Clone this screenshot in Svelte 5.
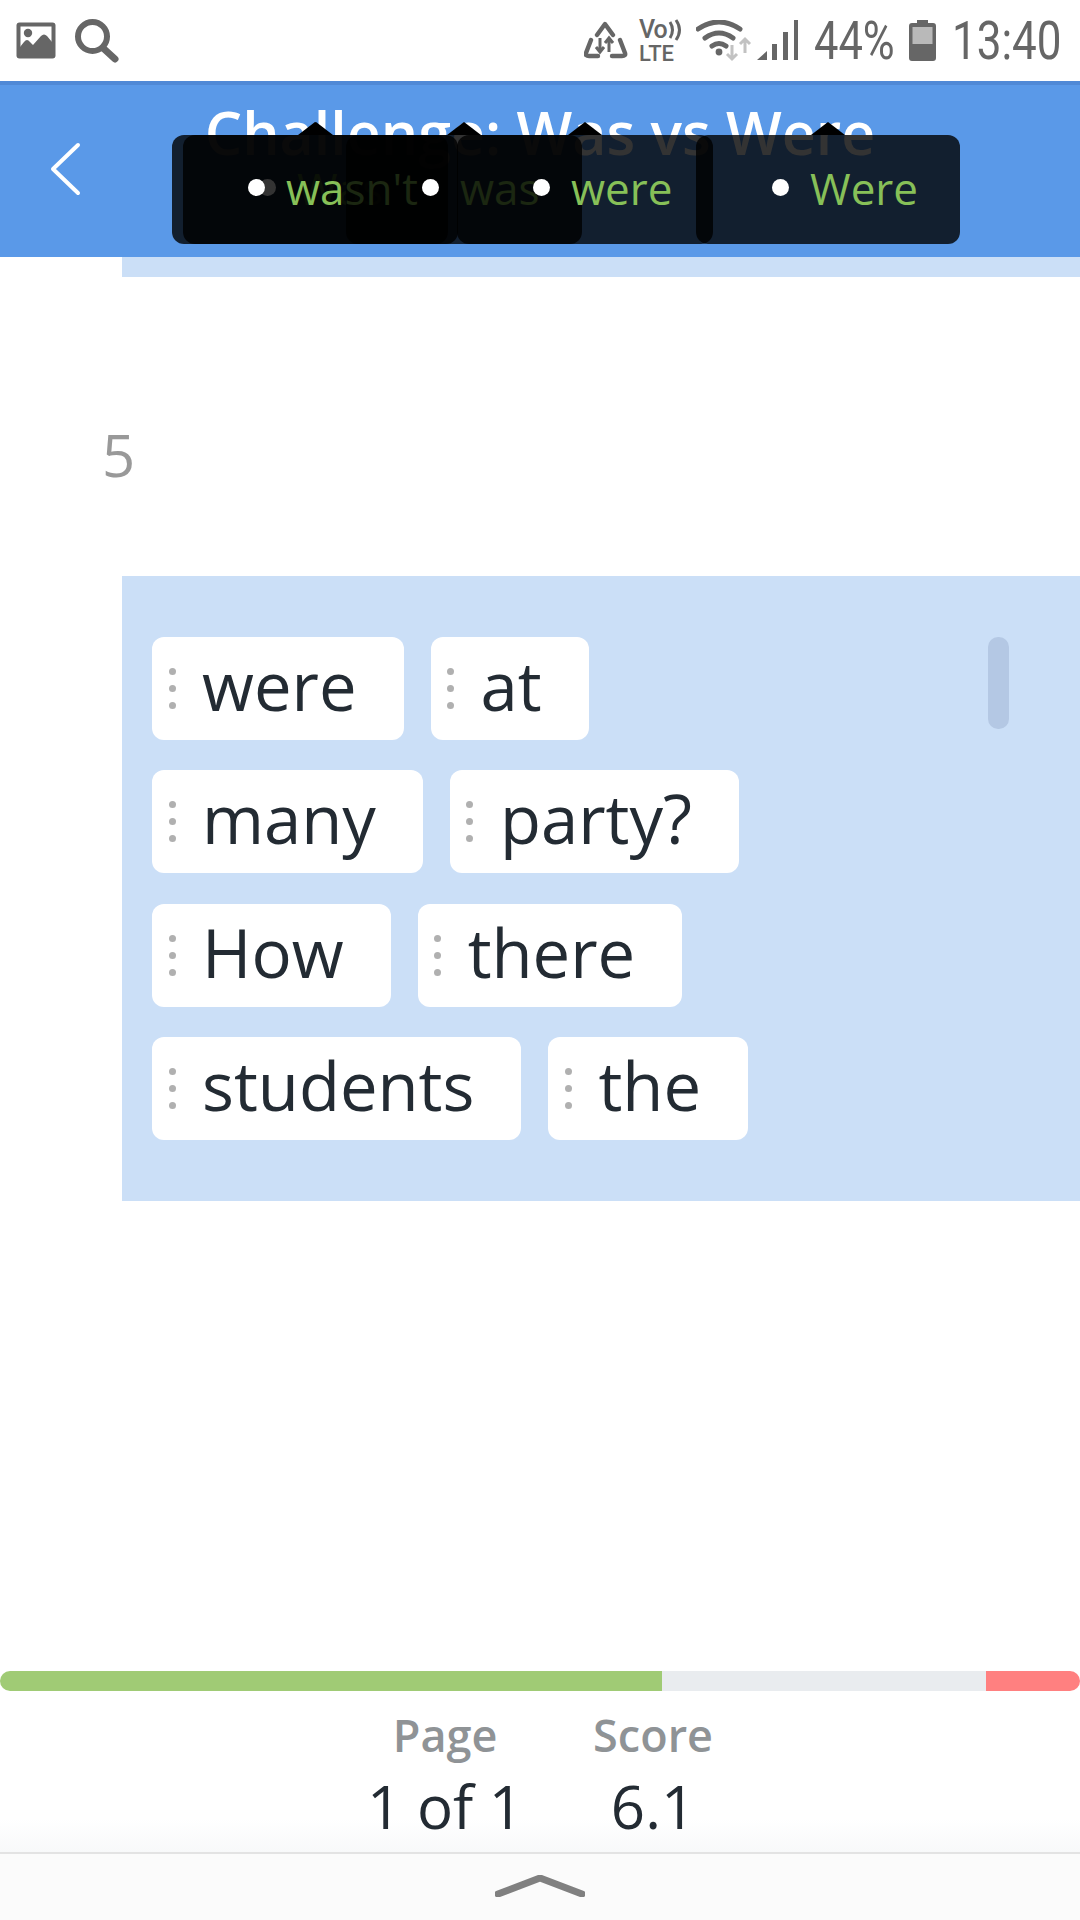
<script>
  const tips = [
    { text: 'Was', left: 183, width: 265, faint: true },
    { text: 'wasn\'t', left: 172, width: 286 },
    { text: 'was', left: 346, width: 236 },
    { text: 'were', left: 457, width: 256 },
    { text: 'Were', left: 696, width: 264 }
  ];
  const rows = [
    ['were', 'at'],
    ['many', 'party?'],
    ['How', 'there'],
    ['students', 'the']
  ];
</script>

<div class="screen">
  <div class="status">
    <div class="status-left">
      <svg class="ic-photo" viewBox="0 0 40 37" aria-hidden="true">
        <rect x="0.5" y="0.5" width="39" height="36" rx="3" fill="#666" />
        <rect x="4.5" y="4.5" width="31" height="27" fill="#fff" />
        <circle cx="12" cy="11" r="4.2" fill="#666" />
        <path d="M4 25 L8 20 Q11 16 14 20 L17 23 L25 14 Q28 11 31 14 L36 20 V34 H4 Z" fill="#666" />
      </svg>
      <svg class="ic-search" viewBox="0 0 44 44" aria-hidden="true">
        <circle cx="17.5" cy="17.5" r="14.5" fill="none" stroke="#666" stroke-width="6" />
        <path d="M28 29 L40 40" fill="none" stroke="#666" stroke-width="7" stroke-linecap="round" />
      </svg>
    </div>
    <div class="status-right">
      <svg class="ic-recycle" viewBox="0 0 44 42" aria-hidden="true">
        <g fill="none" stroke="#666" stroke-width="4.4" stroke-linecap="round" stroke-linejoin="round">
          <path d="M13 14 L21 3 L29 14" />
          <path d="M7 19 L2 32 Q1 35 5 35 H14" />
          <path d="M36 19 L41 32 Q42 35 38 35 H28" />
        </g>
        <g fill="none" stroke="#666" stroke-width="3">
          <path d="M16 17 V31 M12 26 L16 31 L20 26" />
          <path d="M25 31 V17 M21 22 L25 17 L29 22" />
        </g>
      </svg>
      <div class="volte">
        <div class="vo">Vo<svg class="ic-waves" viewBox="0 0 14 22" aria-hidden="true"><path d="M2 3 Q7 11 2 19 M8 1 Q15 11 8 21" fill="none" stroke="#666" stroke-width="3" /></svg></div>
        <div class="lte">LTE</div>
      </div>
      <svg class="ic-wifi" viewBox="0 0 56 42" aria-hidden="true">
        <g fill="none" stroke="#666" stroke-width="5" stroke-linecap="round">
          <path d="M2 9 Q23 -5 44 9" />
          <path d="M9 18 Q23 8 37 18" />
          <path d="M16 26 Q23 21 30 26" />
        </g>
        <circle cx="23" cy="32" r="3.4" fill="#666" />
        <g fill="none" stroke="#c2c2c2" stroke-width="3">
          <path d="M36 25 V39 M31 34 L36 39 L41 34" />
          <path d="M49 33 V19 M44 24 L49 19 L54 24" />
        </g>
      </svg>
      <svg class="ic-signal" viewBox="0 0 43 41" aria-hidden="true">
        <path d="M1 40 L11 31 V40 Z" fill="#666" />
        <rect x="16" y="24" width="5" height="16" fill="#666" />
        <rect x="27" y="12" width="5" height="28" fill="#666" />
        <rect x="38" y="0" width="4" height="40" fill="#666" />
      </svg>
      <div class="batt-pct">44%</div>
      <svg class="ic-batt" viewBox="0 0 27 41" aria-hidden="true">
        <path d="M8 0 H19 V3 H24 Q27 3 27 6 V38 Q27 41 24 41 H3 Q0 41 0 38 V6 Q0 3 3 3 H8 Z" fill="#666" />
        <rect x="3.5" y="7" width="20" height="17" fill="#b9b9b9" />
      </svg>
      <div class="clock">13:40</div>
    </div>
  </div>

  <header class="header">
    <svg class="ic-back" viewBox="0 0 32 54" aria-hidden="true">
      <path d="M28 3 L3 27 L28 51" fill="none" stroke="#fff" stroke-width="4" stroke-linecap="round" stroke-linejoin="round" />
    </svg>
    <h1 class="title">Challenge: Was vs Were</h1>
    {#each tips as t}
      <div class="tip" style="left:{t.left}px;width:{t.width}px">
        <span class="arrow"></span>
        <span class="bullet"></span>
        <span class="tip-text" class:faint={t.faint}>{t.text}</span>
      </div>
    {/each}
  </header>

  <main class="content">
    <div class="strip"></div>
    <div class="num">5</div>
    <section class="panel">
      <div class="scroll"></div>
      {#each rows as row}
        <div class="row">
          {#each row as word}
            <div class="chip">
              <span class="grip"><i></i><i></i><i></i></span>
              <span class="word">{word}</span>
            </div>
          {/each}
        </div>
      {/each}
    </section>
  </main>

  <div class="bar">
    <div class="bar-ok"></div>
    <div class="bar-rest"></div>
    <div class="bar-bad"></div>
  </div>
  <div class="stats">
    <div class="stat">
      <div class="label">Page</div>
      <div class="value">1 of 1</div>
    </div>
    <div class="stat">
      <div class="label">Score</div>
      <div class="value">6.1</div>
    </div>
  </div>
  <footer class="foot">
    <svg class="ic-up" viewBox="0 0 90 22" aria-hidden="true">
      <path d="M3 19 L45 3 L87 19" fill="none" stroke="#808080" stroke-width="7" stroke-linecap="round" stroke-linejoin="round" />
    </svg>
  </footer>
</div>

<style>
  :global(body) {
    margin: 0;
    background: #fff;
  }
  .screen {
    width: 1080px;
    height: 1920px;
    display: flex;
    flex-direction: column;
    overflow: hidden;
    font-family: "Open Sans", sans-serif;
    background: #fff;
  }
  .status {
    height: 81px;
    flex: none;
    display: flex;
    justify-content: space-between;
    align-items: center;
    padding: 0 20px 0 16px;
    box-sizing: border-box;
    color: #666;
    font-family: Roboto, sans-serif;
  }
  .status-left,
  .status-right {
    display: flex;
    align-items: center;
  }
  .ic-photo {
    width: 40px;
    height: 37px;
    margin-right: 19px;
  }
  .ic-search {
    width: 44px;
    height: 44px;
  }
  .ic-recycle {
    width: 44px;
    height: 42px;
    margin-right: 11px;
    margin-top: 2px;
  }
  .volte {
    width: 39px;
    margin-right: 18px;
    margin-top: 2px;
    font-weight: 500;
    line-height: 20px;
  }
  .vo {
    display: flex;
    align-items: center;
    font-size: 25px;
    letter-spacing: -1px;
    height: 21px;
  }
  .ic-waves {
    width: 14px;
    height: 22px;
    margin-left: 1px;
    flex: none;
  }
  .lte {
    font-size: 22px;
    margin-top: 3px;
  }
  .ic-wifi {
    width: 56px;
    height: 42px;
    margin-right: 4px;
  }
  .ic-signal {
    width: 43px;
    height: 41px;
    margin-right: 15px;
  }
  .batt-pct,
  .clock {
    font-size: 53px;
    line-height: 60px;
    white-space: nowrap;
    transform-origin: left center;
  }
  .batt-pct {
    width: 79px;
    margin-right: 16px;
    transform: scaleX(0.82);
  }
  .ic-batt {
    width: 27px;
    height: 41px;
    margin-right: 16px;
  }
  .clock {
    width: 108px;
    transform: scaleX(0.83);
  }
  .header {
    position: relative;
    height: 176px;
    flex: none;
    background: #5a99e8;
    border-top: 4px solid #5089d6;
    box-sizing: border-box;
    display: flex;
    justify-content: center;
  }
  .ic-back {
    position: absolute;
    left: 50px;
    top: 57px;
    width: 32px;
    height: 54px;
  }
  .title {
    margin: 9px 0 0;
    font-size: 59px;
    line-height: 76px;
    font-weight: 600;
    color: #fff;
    white-space: nowrap;
  }
  .tip {
    position: absolute;
    top: 50px;
    height: 109px;
    box-sizing: border-box;
    padding-left: 76px;
    padding-bottom: 4px;
    display: flex;
    align-items: center;
    background: rgba(0, 0, 0, 0.8);
    border-radius: 12px;
  }
  .arrow {
    position: absolute;
    left: 50%;
    top: -13px;
    margin-left: -17px;
    border-style: solid;
    border-width: 0 17px 13px;
    border-color: transparent transparent #000;
  }
  .bullet {
    width: 17px;
    height: 17px;
    margin-right: 21px;
    flex: none;
    border-radius: 50%;
    background: #fff;
  }
  .tip-text {
    font-size: 44px;
    color: #87c058;
    white-space: nowrap;
  }
  .tip-text.faint {
    color: #3a5426;
  }
  .content {
    flex: 1;
    min-height: 0;
  }
  .strip {
    height: 20px;
    margin-left: 122px;
    background: #cbdff7;
  }
  .num {
    margin: 140px 0 0 102px;
    height: 159px;
    font-size: 58px;
    line-height: 76px;
    color: #999;
  }
  .panel {
    position: relative;
    margin-left: 122px;
    box-sizing: border-box;
    height: 625px;
    padding: 61px 30px 0;
    background: #cbdff7;
    display: flex;
    flex-direction: column;
    gap: 30.3px;
  }
  .scroll {
    position: absolute;
    left: 866px;
    top: 61px;
    width: 21px;
    height: 92px;
    border-radius: 10px;
    background: #b4c8e4;
  }
  .row {
    display: flex;
    gap: 27px;
  }
  .chip {
    height: 103px;
    box-sizing: border-box;
    padding: 0 47px 0 16px;
    display: flex;
    align-items: center;
    background: #fff;
    border-radius: 12px;
  }
  .grip {
    width: 8px;
    margin-right: 26px;
    display: flex;
    flex-direction: column;
    align-items: center;
    gap: 10px;
  }
  .grip i {
    display: block;
    width: 7px;
    height: 7px;
    border-radius: 50%;
    background: #b0b0b0;
  }
  .word {
    font-size: 67px;
    line-height: 90px;
    margin-top: -7px;
    color: #232b33;
    white-space: nowrap;
  }
  .bar {
    height: 20px;
    flex: none;
    margin-bottom: 13px;
    display: flex;
    border-radius: 10px;
    overflow: hidden;
  }
  .bar-ok {
    width: 662px;
    background: #a0cb75;
  }
  .bar-rest {
    width: 324px;
    background: #e9ecef;
  }
  .bar-bad {
    flex: 1;
    background: #ff8080;
  }
  .stats {
    flex: none;
    height: 150px;
    box-sizing: border-box;
    display: flex;
    justify-content: center;
    gap: 70px;
    background: linear-gradient(#fff 115px, #f8f9fa);
    border-bottom: 2px solid #e3e3e3;
  }
  .stat {
    text-align: center;
  }
  .label {
    font-size: 45px;
    line-height: 61px;
    font-weight: 600;
    color: #8f9396;
  }
  .value {
    font-size: 60px;
    line-height: 80px;
    margin-top: 1px;
    color: #232b33;
    white-space: nowrap;
  }
  .foot {
    flex: none;
    height: 66px;
    background: #fbfbfb;
    display: flex;
    justify-content: center;
  }
  .ic-up {
    width: 90px;
    height: 22px;
    margin-top: 21px;
  }
</style>
